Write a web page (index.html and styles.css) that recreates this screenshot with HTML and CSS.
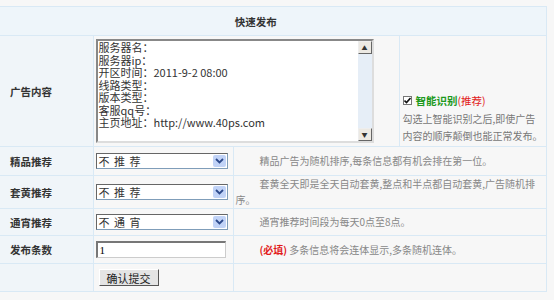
FILE: index.html
```html
<!DOCTYPE html>
<html lang="zh-CN">

<head>
    <meta charset="UTF-8">
    <title>快速发布</title>
    <link rel="stylesheet" href="styles.css">
</head>

<body>
    <form class="publish" action="#" method="post">
        <table class="grid">
            <colgroup>
                <col class="c-label">
                <col class="c-field">
                <col class="c-mid">
                <col class="c-side">
            </colgroup>
            <tr class="row-head">
                <th colspan="4">快速发布</th>
            </tr>
            <tr class="row-content">
                <td class="label">广告内容</td>
                <td colspan="2" class="field">
                    <div class="ta">
                        <textarea class="ta-text" id="content">服务器名：
服务器ip：
开区时间：2011-9-2 08:00
线路类型：
版本类型：
客服qq号：
主页地址：http://www.40ps.com</textarea>
                        <div class="ta-bar">
                            <span class="ta-btn">&#9650;</span>
                            <span class="ta-track"></span>
                            <span class="ta-btn">&#9660;</span>
                        </div>
                    </div>
                </td>
                <td class="side">
                    <label class="smart">
                        <span class="check">
                            <svg width="7" height="7" viewBox="0 0 7 7"><path d="M0.5 3.5 L2.5 5.5 L6.5 1" fill="none" stroke="#111" stroke-width="1.6"/></svg>
                        </span>
                        <span><b class="green">智能识别</b><span class="red">(推荐)</span></span>
                    </label>
                    <p class="tip">勾选上智能识别之后,即使广告<br>内容的顺序颠倒也能正常发布。</p>
                </td>
            </tr>
            <tr class="r28">
                <td class="label">精品推荐</td>
                <td class="field">
                    <div class="sel">
                        <span class="sel-text">不 推 荐</span>
                        <span class="sel-btn"><svg width="9" height="6" viewBox="0 0 9 6"><path d="M1 1 L4.5 4.5 L8 1" fill="none" stroke="#2d4a8c" stroke-width="1.8"/></svg></span>
                    </div>
                </td>
                <td colspan="2" class="desc">精品广告为随机排序,每条信息都有机会排在第一位。</td>
            </tr>
            <tr class="r28">
                <td class="label">套黄推荐</td>
                <td class="field">
                    <div class="sel">
                        <span class="sel-text">不 推 荐</span>
                        <span class="sel-btn"><svg width="9" height="6" viewBox="0 0 9 6"><path d="M1 1 L4.5 4.5 L8 1" fill="none" stroke="#2d4a8c" stroke-width="1.8"/></svg></span>
                    </div>
                </td>
                <td colspan="2" class="desc">套黄全天即是全天自动套黄,整点和半点都自动套黄,广告随机排序。</td>
            </tr>
            <tr class="r26">
                <td class="label">通宵推荐</td>
                <td class="field">
                    <div class="sel">
                        <span class="sel-text">不 通 宵</span>
                        <span class="sel-btn"><svg width="9" height="6" viewBox="0 0 9 6"><path d="M1 1 L4.5 4.5 L8 1" fill="none" stroke="#2d4a8c" stroke-width="1.8"/></svg></span>
                    </div>
                </td>
                <td colspan="2" class="desc">通宵推荐时间段为每天0点至8点。</td>
            </tr>
            <tr class="r27">
                <td class="label">发布条数</td>
                <td class="field">
                    <input class="num" type="text" value="1">
                </td>
                <td colspan="2" class="desc"><b class="red">(必填)</b> 多条信息将会连体显示,多条随机连体。</td>
            </tr>
            <tr class="r27">
                <td class="label"></td>
                <td class="field">
                    <button class="submit" type="submit">确认提交</button>
                </td>
                <td colspan="2" class="desc"></td>
            </tr>
        </table>
    </form>
</body>

</html>
```

FILE: styles.css
```css
body {
    margin: 0;
    padding-top: 6px;
    background: #f7f7f7;
    font-family: "Noto Sans CJK SC", sans-serif;
    font-size: 10.5px;
    color: #333;
}

.grid {
    width: 546px;
    table-layout: fixed;
    border-collapse: collapse;
}

.c-label { width: 93px; }
.c-field { width: 140px; }
.c-mid { width: 166px; }
.c-side { width: 147px; }

.grid th,
.grid td {
    border: 1px solid #d9e9f5;
    padding: 0;
    vertical-align: middle;
    line-height: 15px;
}

.grid tr > :first-child {
    border-left: none;
}

.row-head th {
    height: 28px;
    background: #eef5fa;
    font-weight: bold;
    text-align: center;
    padding-right: 34px;
}

.row-content td {
    height: 108px;
}

.r28 td { height: 28px; }
.r27 td { height: 27px; }
.r26 td { height: 26px; }

.label {
    background: #f0f5f9;
    font-weight: bold;
    padding-left: 10px !important;
}

.field {
    padding-left: 2px !important;
}

/* textarea */
.ta {
    display: flex;
    width: 278px;
    height: 104px;
    box-sizing: border-box;
    border: 2px solid #888;
    border-right-color: #ddd;
    border-bottom-color: #ddd;
    background: #fff;
}

.ta-text {
    flex: 1;
    border: none;
    outline: none;
    resize: none;
    overflow: hidden;
    padding: 0 1px;
    font-family: "Noto Sans CJK SC", sans-serif;
    font-size: 11px;
    line-height: 12.5px;
    color: #333;
    background: #fff;
}

.ta-bar {
    width: 14px;
    display: flex;
    flex-direction: column;
    background: #e6eef7;
}

.ta-btn {
    height: 13px;
    box-sizing: border-box;
    border: 1px solid #eee;
    border-right-color: #666;
    border-bottom-color: #666;
    background: #ece9e3;
    font-size: 6px;
    line-height: 11px;
    text-align: center;
    color: #333;
}

.ta-track {
    flex: 1;
}

/* side */
.side {
    vertical-align: bottom !important;
    padding: 0 0 2px 3px !important;
    border-left-style: dotted !important;
}

.smart {
    display: flex;
    align-items: center;
    gap: 4px;
    font-size: 10.5px;
}

.check {
    width: 9px;
    height: 9px;
    box-sizing: border-box;
    border: 1px solid #777;
    background: #fff;
    display: flex;
    align-items: center;
    justify-content: center;
}

.green {
    color: #1e9a1e;
}

.red {
    color: #e21b1b;
}

.tip {
    margin: 2px 0 0;
    line-height: 17px;
    color: #777;
    font-size: 10px;
}

/* select */
.sel {
    display: flex;
    align-items: center;
    width: 132px;
    height: 16px;
    box-sizing: border-box;
    border: 1px solid #7f9db9;
    border-top-color: #666;
    border-left-color: #666;
    background: #fff;
}

.sel-text {
    flex: 1;
    padding-left: 2px;
    font-size: 11px;
    line-height: 14px;
    word-spacing: 2px;
}

.sel-btn {
    width: 13px;
    height: 12px;
    margin-right: 1px;
    background: #c1d3f7;
    border-radius: 2px;
    display: flex;
    align-items: center;
    justify-content: center;
}

/* desc */
.desc {
    color: #888;
    font-size: 10px;
    line-height: 16px !important;
    text-indent: 24px;
    padding-left: 2px !important;
}

.num {
    display: block;
    width: 130px;
    height: 17px;
    box-sizing: border-box;
    margin: 0;
    padding: 0 2px;
    border: 1px solid #ccc;
    border-top: 2px solid #777;
    border-left: 2px solid #777;
    font-family: "Liberation Serif", serif;
    font-size: 11px;
    background: #fff;
}

.submit {
    display: block;
    margin-left: 3px;
    width: 60px;
    height: 17px;
    padding: 0;
    border: 1px solid #fff;
    border-right-color: #555;
    border-bottom-color: #555;
    background: #e4e4e4;
    font-family: "Noto Sans CJK SC", sans-serif;
    font-size: 11px;
    line-height: 14px;
    color: #222;
}
```
